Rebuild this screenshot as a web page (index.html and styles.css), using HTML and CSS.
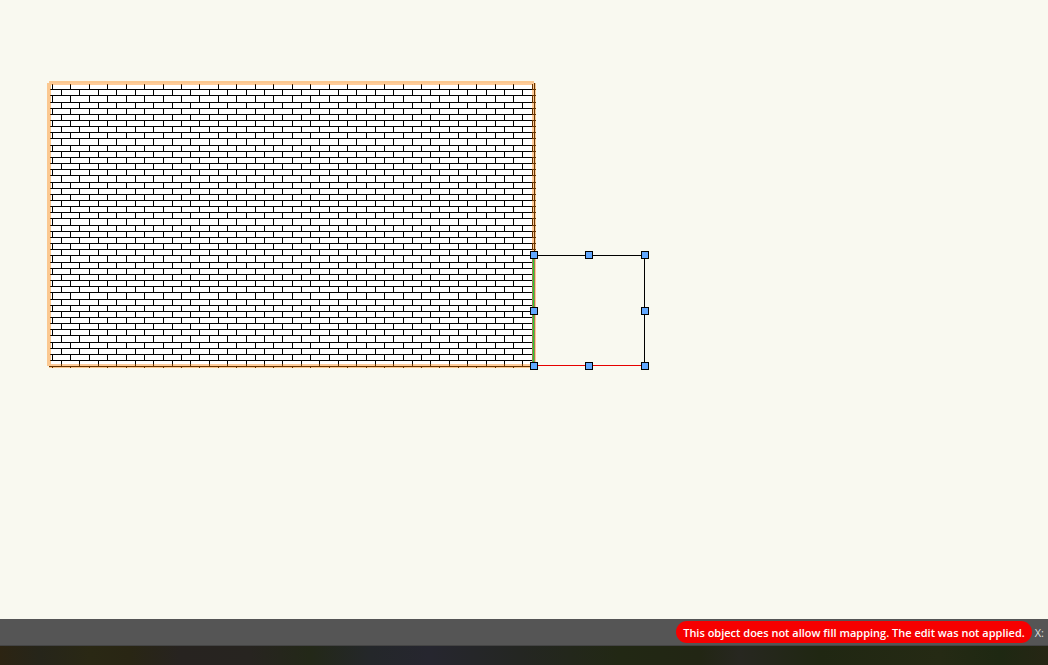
FILE: index.html
```html
<!DOCTYPE html>
<html lang="en">
<head>
<meta charset="utf-8">
<title>Drawing</title>
<link rel="stylesheet" href="styles.css">
</head>
<body>
<main class="canvas">
<svg class="drawing" width="700" height="400" shape-rendering="crispEdges" role="img" aria-label="Brick hatch and selected square">
<rect x="51" y="83" width="483" height="284" fill="#fff"/>
<g id="bricks" fill="#000"></g>
<path d="M534 83h1v283h-1zM49 366h485v1H49z"/>
<path class="glow" d="M49 81h485v4H51v281h-4V83h2zM532 85h2v-2h2v285H49v-4h483z"/>
<path fill="#fcc98f" d="M535 256h1v109h-1z"/>
<path fill="#a0785a" d="M532 256h1v109h-1zM534 256h1v109h-1z"/>
<path fill="#28d228" d="M533 256h1v109h-1z"/>
<path d="M534 255h111v1H534zM644 255h1v111h-1z"/>
<path fill="#e60000" d="M534 365h110v1H534z"/>
<g class="handles">
<rect x="530.5" y="251.5" width="7" height="7"/><rect x="585.5" y="251.5" width="7" height="7"/><rect x="641.5" y="251.5" width="7" height="7"/>
<rect x="530.5" y="307.5" width="7" height="7"/><rect x="641.5" y="307.5" width="7" height="7"/>
<rect x="530.5" y="362.5" width="7" height="7"/><rect x="585.5" y="362.5" width="7" height="7"/><rect x="641.5" y="362.5" width="7" height="7"/>
</g>
</svg>
</main>
<footer class="status">
<span class="alert" role="alert">This object does not allow fill mapping. The edit was not applied.</span>
<span class="coord">X:</span>
</footer>
<div class="backdrop"></div>
<script src="bricks.js"></script>
</body>
</html>
```
FILE: styles.css
```css
body {
  margin: 0;
  height: 100vh;
  display: flex;
  flex-direction: column;
  overflow: hidden;
  font-family: "Open Sans", "Noto Sans", sans-serif;
}
.canvas {
  flex: 1;
  min-height: 0;
  background: #f9f9f0;
}
.drawing {
  display: block;
}
.glow {
  fill: #ff8000;
  fill-opacity: .4;
}
.handles {
  fill: #62a8ff;
  stroke: #000;
}
.status {
  display: flex;
  align-items: center;
  justify-content: flex-end;
  gap: 3px;
  height: 26px;
  padding: 0 4px 0 0;
  background: #555;
  border-bottom: 1px solid #444;
}
.alert {
  padding: 2px 7px 0;
  border-radius: 11px;
  background: #f60000;
  color: #fff;
  font-size: 11px;
  font-weight: 600;
  line-height: 20px;
}
.coord {
  color: #ddd;
  font-size: 11px;
}
.backdrop {
  height: 19px;
  background: linear-gradient(90deg, #2c2412 0, #26251a 40px, #2a2814 90px, #292614 130px, #272320 180px, #272420 250px, #232818 310px, #24272a 370px, #26262f 430px, #242622 520px, #222814 620px, #222614 700px, #272720 740px, #202712 820px, #252a14 940px, #1e2812 1000px, #262614 100%);
}
```
FILE: bricks.js
```js
const group = document.getElementById("bricks");
const add = (x, y, w, h) => {
  const r = document.createElementNS("http://www.w3.org/2000/svg", "rect");
  Object.entries({ x, y, width: w, height: h }).forEach(([k, v]) => r.setAttribute(k, v));
  group.append(r);
};
const course = (i) => Math.floor(89.7 + 6.156 * i);
for (let row = 0; row <= 46; row++) {
  const top = row === 0 ? 84 : course(row - 1);
  const bottom = Math.min(course(row), 368);
  if (row < 46) add(50, bottom, 486, 1);
  const start = row % 2 ? 61.45 : 52.3;
  for (let x = start; x < 534; x += 18.46) add(Math.floor(x), top, 1, bottom - top);
}
```
